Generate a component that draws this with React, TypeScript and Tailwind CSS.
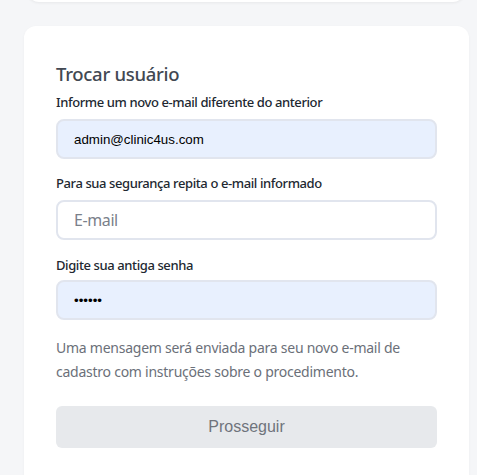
import React from "react";

export default function App() {
  return (
    <div className="flex h-screen flex-col overflow-hidden bg-[#f5f6f8] pl-6 pr-2" style={{ fontFamily: '"Noto Sans", "Open Sans", sans-serif' }}>
      <div className="ml-[3px] mr-[4px] h-[40px] -mt-[38px] shrink-0 rounded-b-xl bg-white shadow-[0_1px_3px_rgba(0,0,0,0.06)]" />
      <div className="mt-6 shrink-0 rounded-xl bg-white px-8 pt-[35px] pb-10 shadow-[0_1px_3px_rgba(0,0,0,0.04)]">
        <h2 className="text-[18.5px] leading-[26px] font-medium tracking-[-0.3px] text-[#424852]">Trocar usuário</h2>
        <label className="mt-[5px] block text-[13px] leading-[20px] font-medium tracking-[-0.4px] text-[#222831]">
          Informe um novo e-mail diferente do anterior
        </label>
        <input
          readOnly
          value="admin@clinic4us.com"
          className="mt-[7px] block h-10 w-full rounded-lg border-2 border-[#e1e5ee] bg-[#e8f0fe] px-4 text-[13.333px] text-black outline-none"
          style={{ fontFamily: '"Liberation Sans", Arial, sans-serif' }}
        />
        <label className="mt-[14px] block text-[13px] leading-[20px] font-medium tracking-[-0.4px] text-[#222831]">
          Para sua segurança repita o e-mail informado
        </label>
        <input
          readOnly
          placeholder="E-mail"
          className="mt-[7px] block h-10 w-full rounded-lg border-2 border-[#e1e5ee] bg-white px-4 text-[16px] tracking-[-0.4px] text-black outline-none placeholder:text-[#7a808a]"
        />
        <label className="mt-[15px] block text-[13px] leading-[20px] font-medium tracking-[-0.4px] text-[#222831]">
          Digite sua antiga senha
        </label>
        <input
          readOnly
          type="password"
          value="123456"
          className="mt-[5px] block h-10 w-full rounded-lg border-2 border-[#e1e5ee] bg-[#e8f0fe] px-4 text-[13.333px] text-black outline-none"
          style={{ fontFamily: '"Liberation Sans", Arial, sans-serif' }}
        />
        <p className="mt-4 text-[14px] leading-[24px] tracking-[-0.25px] text-[#6b7079]">
          Uma mensagem será enviada para seu novo e-mail de cadastro com instruções sobre o procedimento.
        </p>
        <button
          className="mt-[22px] block h-[42px] w-full rounded-md bg-[#e7e9ec] text-[16px] text-[#6f747c]"
          style={{ fontFamily: '"Liberation Sans", Arial, sans-serif' }}
        >
          Prosseguir
        </button>
      </div>
    </div>
  );
}
